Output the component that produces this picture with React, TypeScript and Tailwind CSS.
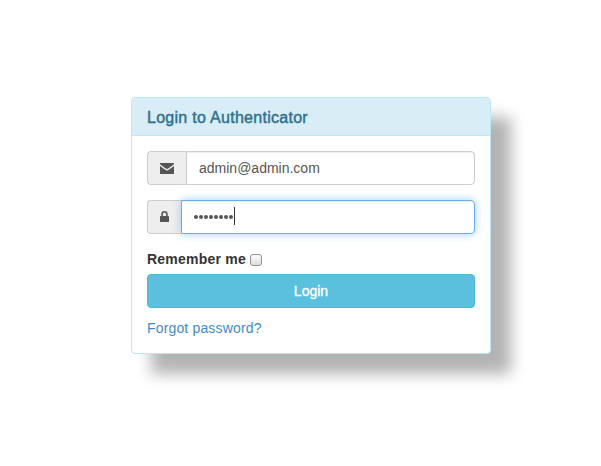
import React from "react";

function Envelope() {
  return (
    <svg className="block h-[11px] w-[14px]" viewBox="0 0 14 11" fill="#555">
      <path d="M.5 0H13.5Q14 0 14 .5V1.3L8.2 5.6Q7 6.4 5.8 5.6L0 1.3V.5Q0 0 .5 0Z" />
      <path d="M0 3L5.2 6.8Q7 8 8.8 6.8L14 3V10.4Q14 11 13.4 11H.6Q0 11 0 10.4Z" />
    </svg>
  );
}

function Lock() {
  return (
    <svg className="mb-px block h-[11px] w-[9px]" viewBox="0 0 9 11">
      <path d="M2.1 5.5V3.2a2.4 2.4 0 0 1 4.8 0V5.5" fill="none" stroke="#555" strokeWidth="1.6" />
      <rect y="5" width="9" height="6" rx="0.6" fill="#555" />
    </svg>
  );
}

export default function App() {
  return (
    <main className="h-[466px] w-[601px] overflow-hidden bg-white pt-[97px] pl-[131px] font-['Liberation_Sans',Arial,sans-serif] text-sm leading-5 text-[#333]">
      <section className="h-[257px] w-[360px] rounded border border-[#bce8f1] bg-white shadow-[20px_20px_15px_rgba(0,0,0,0.3)]">
        <header className="flex h-[38px] items-center rounded-t-[3px] border-b border-[#bce8f1] bg-[#d9edf7] px-[15px] pt-[2px] text-[#31708f]">
          <h3 className="text-base font-normal tracking-[0.28px] [-webkit-text-stroke:0.45px_#31708f]">Login to Authenticator</h3>
        </header>
        <form className="flex flex-col px-[15px] pt-[15px]" onSubmit={(e) => e.preventDefault()}>
          <div className="flex h-[34px]">
            <span className="flex w-[39px] items-center rounded-l border border-r-0 border-[#ccc] bg-[#eee] pl-3">
              <Envelope />
            </span>
            <div className="flex flex-1 items-center rounded-r border border-[#ccc] px-3 text-[#555] shadow-[inset_0_1px_1px_rgba(0,0,0,0.075)]">
              <span>admin@admin.com</span>
            </div>
          </div>
          <div className="mt-[15px] flex h-[34px]">
            <span className="flex w-[34px] items-center rounded-l border border-r-0 border-[#ccc] bg-[#eee] pl-3">
              <Lock />
            </span>
            <div className="flex flex-1 items-center rounded-r border border-[#66afe9] pl-3 shadow-[inset_0_1px_1px_rgba(0,0,0,0.075),0_0_8px_rgba(102,175,233,0.6)]">
              <div className="flex gap-px">
                {Array.from({ length: 8 }, (_, i) => (
                  <span key={i} className="size-1 rounded-full bg-[#555]" />
                ))}
              </div>
              <span className="-mt-0.5 ml-px h-[18px] w-px bg-[#333]" />
            </div>
          </div>
          <label className="mt-[15px] mb-[5px] flex h-5 items-center font-bold">
            <span className="w-[103px] tracking-[0.22px]">Remember me</span>
            <span className="mt-[2px] size-3 rounded-[3px] border border-[#929292] bg-linear-to-b from-white to-[#ddd]" />
          </label>
          <button className="flex h-[34px] items-center justify-center rounded border border-[#46b8da] bg-[#5bc0de] text-white [-webkit-text-stroke:0.35px_white]">
            Login
          </button>
          <a className="mt-[10px] tracking-[0.16px] text-[#428bca]">Forgot password?</a>
        </form>
      </section>
    </main>
  );
}
